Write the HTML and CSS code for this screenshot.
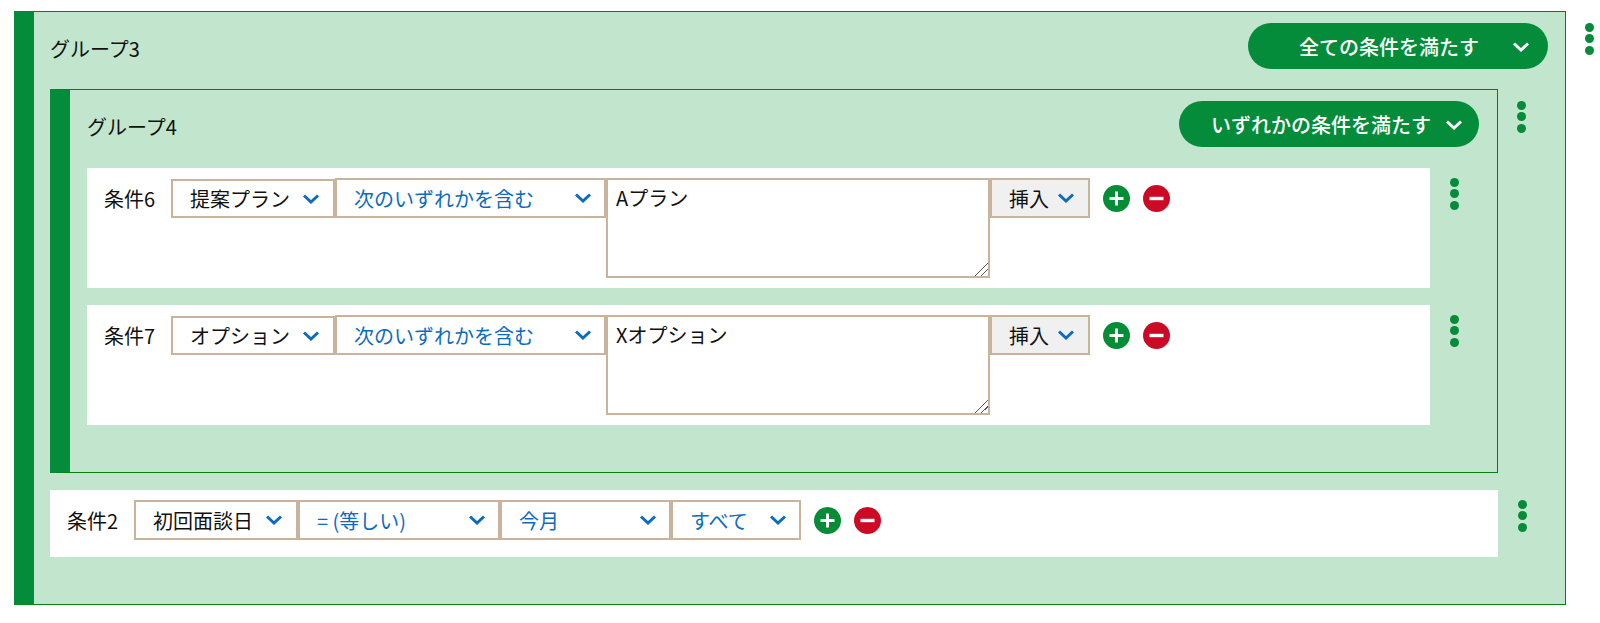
FILE: index.html
```html
<!DOCTYPE html>
<html>
<head>
    <meta charset="UTF-8">
    <title>条件グループ</title>
    <link rel="stylesheet" href="styles.css">
</head>
<body>
    <svg class="defs">
        <symbol id="chev" viewBox="0 0 18 10"><path d="M2 1.5 L9 8 L16 1.5" fill="none" stroke="currentColor" stroke-width="3"/></symbol>
        <symbol id="plus" viewBox="0 0 27 27"><circle cx="13.5" cy="13.5" r="13.5" fill="#058c37"/><path d="M13.5 6.5 V20.5 M6.5 13.5 H20.5" stroke="#fff" stroke-width="3"/></symbol>
        <symbol id="minus" viewBox="0 0 27 27"><circle cx="13.5" cy="13.5" r="13.5" fill="#cc0a26"/><path d="M6.5 13.5 H20.5" stroke="#fff" stroke-width="3.4"/></symbol>
    </svg>

    <div class="item item-top">
        <div class="group">
            <div class="group-head">
                <div class="group-name">グループ3</div>
                <div class="pill"><span>全ての条件を満たす</span><svg class="chev"><use href="#chev"/></svg></div>
            </div>

            <div class="item item-group">
                <div class="group group-inner">
                    <div class="group-head">
                        <div class="group-name">グループ4</div>
                        <div class="pill"><span>いずれかの条件を満たす</span><svg class="chev"><use href="#chev"/></svg></div>
                    </div>

                    <div class="item item-cond">
                        <div class="row">
                            <div class="label">条件6</div>
                            <div class="field field-name w-name w-offset"><span>提案プラン</span><svg class="chev"><use href="#chev"/></svg></div>
                            <div class="field field-op w-op"><span>次のいずれかを含む</span><svg class="chev"><use href="#chev"/></svg></div>
                            <textarea class="value">Aプラン</textarea>
                            <div class="field insert"><span>挿入</span><svg class="chev"><use href="#chev"/></svg></div>
                            <svg class="circle"><use href="#plus"/></svg>
                            <svg class="circle"><use href="#minus"/></svg>
                        </div>
                        <div class="kebab"><i></i><i></i><i></i></div>
                    </div>

                    <div class="item item-cond">
                        <div class="row">
                            <div class="label">条件7</div>
                            <div class="field field-name w-name w-offset"><span>オプション</span><svg class="chev"><use href="#chev"/></svg></div>
                            <div class="field field-op w-op"><span>次のいずれかを含む</span><svg class="chev"><use href="#chev"/></svg></div>
                            <textarea class="value">Xオプション</textarea>
                            <div class="field insert"><span>挿入</span><svg class="chev"><use href="#chev"/></svg></div>
                            <svg class="circle"><use href="#plus"/></svg>
                            <svg class="circle"><use href="#minus"/></svg>
                        </div>
                        <div class="kebab"><i></i><i></i><i></i></div>
                    </div>
                </div>
                <div class="kebab"><i></i><i></i><i></i></div>
            </div>

            <div class="item item-group item-last">
                <div class="row row-short">
                    <div class="label">条件2</div>
                    <div class="field field-name w-name"><span>初回面談日</span><svg class="chev"><use href="#chev"/></svg></div>
                    <div class="field field-op w-eq"><span>= (等しい)</span><svg class="chev"><use href="#chev"/></svg></div>
                    <div class="field field-op w-month"><span>今月</span><svg class="chev"><use href="#chev"/></svg></div>
                    <div class="field field-op w-all"><span>すべて</span><svg class="chev"><use href="#chev"/></svg></div>
                    <svg class="circle"><use href="#plus"/></svg>
                    <svg class="circle"><use href="#minus"/></svg>
                </div>
                <div class="kebab"><i></i><i></i><i></i></div>
            </div>
        </div>
        <div class="kebab"><i></i><i></i><i></i></div>
    </div>
</body>
</html>
```

FILE: styles.css
```css
body {
    margin: 0;
    padding: 11px 0 0 14px;
    font-family: "Noto Sans CJK JP", "Noto Sans", sans-serif;
    font-size: 20px;
    color: #111;
    background: #fff;
}
.defs {
    display: none;
}
.item {
    display: flex;
    align-items: flex-start;
}
.item-top {
    gap: 19px;
}
.item-group {
    gap: 19px;
    width: 1477px;
}
.item-cond {
    gap: 20px;
    width: 1373px;
    margin-bottom: 17px;
}
.item-last {
    gap: 20px;
    margin-top: 17px;
}
.item-cond .kebab,
.item-last .kebab {
    margin-top: 10px;
}
.group {
    box-sizing: border-box;
    width: 1552px;
    padding: 11px 17px 47px 16px;
    background: #c2e6cd;
    border: 1px solid #078010;
    border-left: 20px solid #058c3a;
}
.group-inner {
    width: 1448px;
    padding: 11px 18px 30px 17px;
}
.group-head {
    display: flex;
    justify-content: space-between;
    align-items: center;
    margin-bottom: 20px;
}
.group-inner .group-head {
    margin-bottom: 21px;
}
.group-name {
    padding-top: 4px;
}
.pill {
    box-sizing: border-box;
    display: flex;
    align-items: center;
    gap: 14px;
    width: 300px;
    height: 46px;
    padding: 0 18px 0 32px;
    border-radius: 23px;
    background: #058c3a;
    color: #fff;
    font-weight: 500;
}
.pill span {
    flex: 1;
    text-align: center;
    white-space: nowrap;
}
.pill .chev {
    margin-top: 2px;
    color: #fff;
}
.chev {
    flex: none;
    width: 18px;
    height: 10px;
    color: #0b6cbf;
}
.row {
    box-sizing: border-box;
    display: flex;
    align-items: flex-start;
    flex: none;
    width: 1343px;
    height: 120px;
    padding: 10px 0 0 17px;
    background: #fff;
}
.row-short {
    width: 1448px;
    height: 67px;
}
.label {
    width: 67px;
    line-height: 42px;
    flex: none;
}
.field {
    box-sizing: border-box;
    display: flex;
    align-items: center;
    justify-content: space-between;
    flex: none;
    height: 40px;
    padding: 0 12px 0 17px;
    border: 2px solid #c9b39b;
    background: #fff;
    white-space: nowrap;
}
.field-op {
    color: #0b6cbf;
}
.w-name {
    width: 164px;
    padding-right: 13px;
}
.w-offset {
    height: 39px;
    margin-top: 1px;
}
.w-op {
    width: 271px;
}
.w-eq {
    width: 202px;
}
.w-month {
    width: 171px;
}
.w-all {
    width: 130px;
}
.value {
    box-sizing: border-box;
    flex: none;
    display: block;
    width: 384px;
    height: 100px;
    margin: 0;
    padding: 3px 8px;
    border: 2px solid #c9b39b;
    border-radius: 0;
    outline: none;
    font: inherit;
    color: #111;
}
.value::-webkit-resizer {
    background: linear-gradient(135deg, transparent 55%, #555 55%, #555 59%, transparent 59%, transparent 76%, #555 76%, #555 80%, transparent 80%);
}
.insert {
    width: 100px;
    padding: 0 13px 0 17px;
    background: #f0f0f0;
}
.circle {
    flex: none;
    width: 27px;
    height: 27px;
    margin: 7px 0 0 13px;
}
.kebab {
    display: flex;
    flex-direction: column;
    gap: 2.4px;
    flex: none;
    margin-top: 12px;
}
.kebab i {
    display: block;
    width: 9px;
    height: 9px;
    border-radius: 50%;
    background: #058c3a;
}
```
